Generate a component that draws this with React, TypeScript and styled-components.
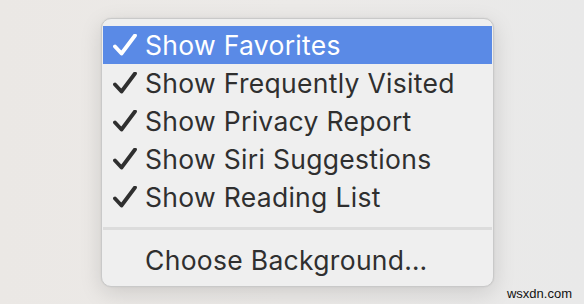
import React from "react";
import styled, { createGlobalStyle } from "styled-components";

const Global = createGlobalStyle`
  html, body { margin: 0; padding: 0; }
  body {
    width: 584px;
    height: 304px;
    overflow: hidden;
    background: linear-gradient(90deg, #ebe8e5 0%, #eceae8 50%, #e9e9e9 100%);
    font-family: Inter, "Liberation Sans", Arial, sans-serif;
  }
`;

const Page = styled.div`
  position: relative;
  width: 584px;
  height: 304px;
  padding: 18px 0 0 101px;
  box-sizing: border-box;
`;

const Menu = styled.div`
  width: 393px;
  box-sizing: border-box;
  padding: 7px 1px;
  background: #efefef;
  border: 1px solid #c9c9c9;
  border-radius: 10px;
  box-shadow: 0 6px 22px rgba(0, 0, 0, 0.13), 0 0 2px rgba(0, 0, 0, 0.08);
  display: flex;
  flex-direction: column;
`;

const Item = styled.div<{ $active?: boolean }>`
  height: 38px;
  display: flex;
  align-items: center;
  background: ${(p) => (p.$active ? "#5a8ae6" : "transparent")};
  color: ${(p) => (p.$active ? "#ffffff" : "#2f2f2f")};
  font-size: 26.5px;
  letter-spacing: 0.3px;
  white-space: nowrap;
`;

const CheckSlot = styled.span`
  width: 42px;
  flex: none;
  display: flex;
  justify-content: flex-end;
  padding-right: 8px;
  box-sizing: border-box;
`;

const Separator = styled.div`
  height: 25px;
  display: flex;
  align-items: center;
  &::after {
    content: "";
    flex: 1;
    height: 3px;
    background: #dcdcdc;
  }
`;

const Watermark = styled.div`
  position: absolute;
  right: 12px;
  bottom: 3px;
  font-family: "Liberation Sans", Arial, sans-serif;
  font-size: 13px;
  color: #111;
`;

const Check = ({ color }: { color: string }) => (
  <svg width="24" height="22" viewBox="0 0 24 22">
    <path
      d="M2 12.5 L8.5 19.5 L22 1.5"
      fill="none"
      stroke={color}
      strokeWidth="3.8"
      strokeLinecap="round"
      strokeLinejoin="round"
    />
  </svg>
);

const items = [
  "Show Favorites",
  "Show Frequently Visited",
  "Show Privacy Report",
  "Show Siri Suggestions",
  "Show Reading List",
];

export default function App() {
  return (
    <>
      <Global />
      <Page>
        <Menu>
          {items.map((t, i) => (
            <Item key={t} $active={i === 0}>
              <CheckSlot>
                <Check color={i === 0 ? "#ffffff" : "#2f2f2f"} />
              </CheckSlot>
              {t}
            </Item>
          ))}
          <Separator />
          <Item>
            <CheckSlot />
            Choose Background…
          </Item>
        </Menu>
        <Watermark>wsxdn.com</Watermark>
      </Page>
    </>
  );
}
